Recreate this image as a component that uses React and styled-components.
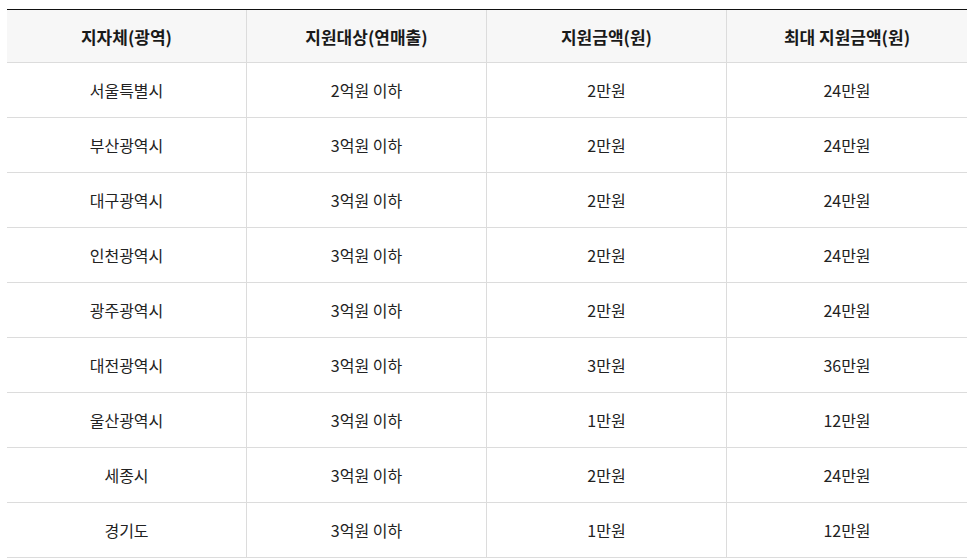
import React from "react";
import styled, { createGlobalStyle } from "styled-components";

const GlobalStyle = createGlobalStyle`
  body {
    margin: 0;
    background: #ffffff;
    font-family: "Noto Sans CJK KR", "Noto Sans", sans-serif;
    color: #222222;
  }
`;

const Page = styled.div`
  padding: 9px 13px 0 7px;
`;

const Table = styled.div`
  width: 960px;
  border-top: 1px solid #111111;
`;

const Row = styled.div`
  display: grid;
  grid-template-columns: 239px 240px 240px 241px;
  height: ${(p) => (p.$head ? "52px" : "54px")};
  border-bottom: 1px solid #dcdcdc;
  background: ${(p) => (p.$head ? "#f7f7f7" : "#ffffff")};
`;

const Cell = styled.div`
  display: flex;
  align-items: center;
  justify-content: center;
  font-size: ${(p) => (p.$head ? "17px" : "16px")};
  font-weight: ${(p) => (p.$head ? 700 : 400)};
  color: ${(p) => (p.$head ? "#1a1a1a" : "#222222")};
  & + & {
    border-left: 1px solid #dcdcdc;
  }
`;

const head = ["지자체(광역)", "지원대상(연매출)", "지원금액(원)", "최대 지원금액(원)"];

const rows = [
  ["서울특별시", "2억원 이하", "2만원", "24만원"],
  ["부산광역시", "3억원 이하", "2만원", "24만원"],
  ["대구광역시", "3억원 이하", "2만원", "24만원"],
  ["인천광역시", "3억원 이하", "2만원", "24만원"],
  ["광주광역시", "3억원 이하", "2만원", "24만원"],
  ["대전광역시", "3억원 이하", "3만원", "36만원"],
  ["울산광역시", "3억원 이하", "1만원", "12만원"],
  ["세종시", "3억원 이하", "2만원", "24만원"],
  ["경기도", "3억원 이하", "1만원", "12만원"],
];

export default function App() {
  return (
    <Page>
      <GlobalStyle />
      <Table>
        <Row $head>
          {head.map((h) => (
            <Cell $head key={h}>
              {h}
            </Cell>
          ))}
        </Row>
        {rows.map((r) => (
          <Row key={r[0]}>
            {r.map((c, i) => (
              <Cell key={i}>{c}</Cell>
            ))}
          </Row>
        ))}
      </Table>
    </Page>
  );
}
